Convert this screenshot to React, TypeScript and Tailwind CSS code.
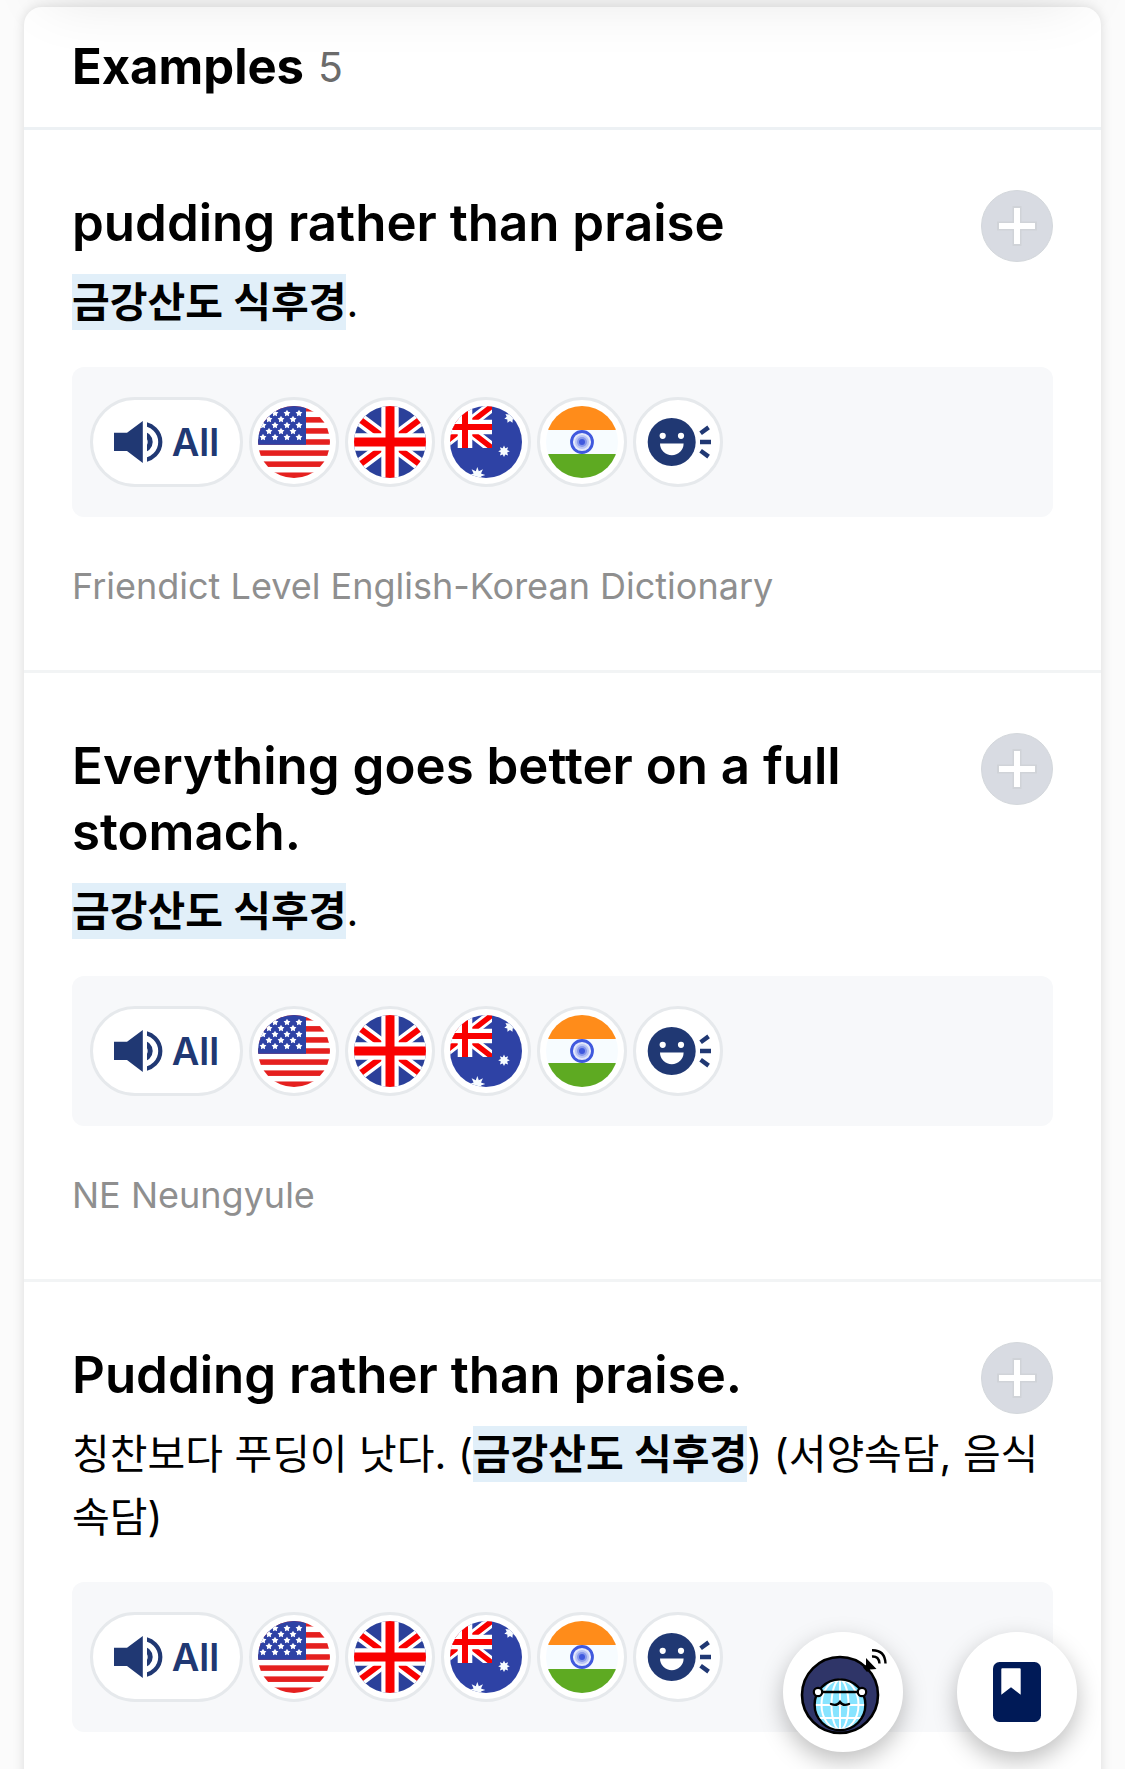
import React, { useId } from "react";

const NAVY = "#203873";

function starPoints(cx: number, cy: number, r: number, inner: number, n: number) {
  const pts: string[] = [];
  for (let i = 0; i < n * 2; i++) {
    const a = (Math.PI * i) / n - Math.PI / 2;
    const d = i % 2 === 0 ? r : inner;
    pts.push(`${(cx + d * Math.cos(a)).toFixed(2)},${(cy + d * Math.sin(a)).toFixed(2)}`);
  }
  return pts.join(" ");
}

function Flag({ children }: { children: React.ReactNode }) {
  const id = useId();
  return (
    <svg viewBox="0 0 72 72" className="size-[72px]" aria-hidden="true">
      <clipPath id={id}>
        <circle cx="36" cy="36" r="36" />
      </clipPath>
      <g clipPath={`url(#${id})`}>{children}</g>
    </svg>
  );
}

const US_STARS: [number, number][] = [
  [41, 7.3], [29, 7.3], [17, 7.3],
  [35, 13.3], [23, 13.3], [11, 13.3],
  [41, 19.3], [29, 19.3], [17, 19.3], [5, 19.3],
  [35, 25.3], [23, 25.3], [11, 25.3],
  [41, 31.3], [29, 31.3], [17, 31.3], [5, 31.3],
];

function UsFlag() {
  return (
    <Flag>
      <rect width="72" height="72" fill="#fff" />
      {[0, 1, 2, 3, 4, 5, 6].map((i) => (
        <rect key={i} y={i * 11.08} width="72" height="5.54" fill="#e5201f" />
      ))}
      <rect width="48" height="38.8" fill="#2e42a5" />
      {US_STARS.map(([x, y]) => (
        <polygon key={`${x}-${y}`} points={starPoints(x, y, 3.6, 1.9, 5)} fill="#fff" />
      ))}
    </Flag>
  );
}

function UkFlag() {
  return (
    <Flag>
      <rect width="72" height="72" fill="#2b409a" />
      <path d="M-12 0 84 72M84 0-12 72" stroke="#fff" strokeWidth="13" />
      <path d="M-12 0 84 72M84 0-12 72" stroke="#f90000" strokeWidth="6" />
      <path d="M36 0V72M0 36H72" stroke="#fff" strokeWidth="17.4" />
      <path d="M36 0V72M0 36H72" stroke="#f90000" strokeWidth="9" />
    </Flag>
  );
}

function AuFlag() {
  const id = useId();
  return (
    <Flag>
      <rect width="72" height="72" fill="#2e42a5" />
      <clipPath id={id}>
        <rect width="42" height="42" />
      </clipPath>
      <g clipPath={`url(#${id})`}>
        <path d="M-12 0 42 42M42 0-12 42" stroke="#fff" strokeWidth="11" />
        <path d="M-12 0 42 42M42 0-12 42" stroke="#f90000" strokeWidth="5.4" />
        <path d="M15 0V42M0 21H42" stroke="#fff" strokeWidth="14.6" />
        <path d="M15 0V42M0 21H42" stroke="#f90000" strokeWidth="6" />
      </g>
      <polygon points={starPoints(54, 45.3, 5.8, 3.4, 8)} fill="#f7fcff" />
      <polygon points={starPoints(60, 11.5, 5.8, 3.4, 7)} fill="#f7fcff" />
      <polygon points={starPoints(27.3, 69, 8, 4, 8)} fill="#f7fcff" />
    </Flag>
  );
}

function InFlag() {
  return (
    <Flag>
      <rect width="72" height="72" fill="#f7fcff" />
      <rect width="72" height="24" fill="#ff8c1a" />
      <rect y="48" width="72" height="24" fill="#5eaa22" />
      <circle cx="36" cy="36" r="10.5" fill="#e3e8fb" stroke="#4059de" strokeWidth="2.8" />
      <circle cx="36" cy="36" r="7" fill="#b9c4f4" />
      <circle cx="36" cy="36" r="5" fill="#8798ec" />
      <circle cx="36" cy="36" r="3" fill="#4059de" />
    </Flag>
  );
}

function SmileIcon() {
  return (
    <svg viewBox="0 0 84 84" className="size-[84px]" fill="none" aria-hidden="true">
      <circle cx="35.7" cy="42" r="24" fill={NAVY} />
      <circle cx="26.7" cy="35.8" r="3.1" fill="#fff" />
      <circle cx="45" cy="35.8" r="3.1" fill="#fff" />
      <path d="M24 43.4H47.6A11.8 11.8 0 0 1 24 43.4Z" fill="#fff" />
      <path d="M64.6 33.2 72.6 27.4M64 42H75M64.6 50.8 72.6 56.6" stroke={NAVY} strokeWidth="4.4" />
    </svg>
  );
}

function SpeakerIcon() {
  const id = useId();
  return (
    <svg viewBox="0 0 49 42" className="h-[42px] w-[49px]" fill="none" aria-hidden="true">
      <path d="M0 11.7H13L28.8 0V42L13 30H0Z" fill={NAVY} />
      <clipPath id={id}>
        <rect x="33" width="16" height="42" />
      </clipPath>
      <g clipPath={`url(#${id})`} stroke={NAVY}>
        <circle cx="28.2" cy="21" r="18.1" strokeWidth="4.2" />
        <circle cx="28.2" cy="21" r="8" strokeWidth="5" />
      </g>
    </svg>
  );
}

const VOICES = [
  { label: "American pronunciation", Icon: UsFlag },
  { label: "British pronunciation", Icon: UkFlag },
  { label: "Australian pronunciation", Icon: AuFlag },
  { label: "Indian pronunciation", Icon: InFlag },
  { label: "Friendly voice", Icon: SmileIcon },
];

function VoiceBar() {
  return (
    <div className="mt-[33px] flex flex-wrap gap-[6px] rounded-xl bg-[#f7f8fa] px-[18px] py-[30px]">
      <button
        type="button"
        className="flex h-[90px] w-[153px] items-center justify-center gap-[9px] rounded-full border-3 border-[#e6e9ec] bg-white text-[38px] leading-none font-semibold text-[#203873]"
      >
        <SpeakerIcon />
        All
      </button>
      {VOICES.map(({ label, Icon }) => (
        <button
          key={label}
          type="button"
          aria-label={label}
          className="flex size-[90px] items-center justify-center rounded-full border-3 border-[#e6e9ec] bg-white"
        >
          <Icon />
        </button>
      ))}
    </div>
  );
}

function Mark({ children }: { children: React.ReactNode }) {
  return <mark className="bg-[#e1eff9] py-[3px] font-semibold text-black">{children}</mark>;
}

function Example({
  title,
  translation,
  source,
}: {
  title: string;
  translation: React.ReactNode;
  source?: string;
}) {
  return (
    <li className="border-b-3 border-[#f2f4f5] px-12 pt-[60px] pb-[60px]">
      <div className="flex items-start justify-between gap-12">
        <h3 className="min-w-0 flex-1 pb-[6px] text-[51px] leading-[66px] font-semibold text-black">{title}</h3>
        <button type="button" aria-label="Add to wordbook" className="size-[72px] shrink-0">
          <svg viewBox="0 0 72 72" className="size-full" aria-hidden="true">
            <circle cx="36" cy="36" r="35.5" fill="#d8dbe2" stroke="#d3d7db" />
            <path d="M36 16V56M16 36H56" stroke="#d0d3d8" strokeWidth="9" />
            <path d="M36 18V54M18 36H54" stroke="#fff" strokeWidth="6" />
          </svg>
        </button>
      </div>
      <p className="mt-[9px] text-[41px] leading-[63px] text-black">{translation}</p>
      <VoiceBar />
      {source && <p className="mt-[45px] text-[36px] leading-[48px] text-[#8f8f8f]">{source}</p>}
    </li>
  );
}

function GlobeMascot() {
  return (
    <svg viewBox="0 0 120 120" className="size-full" fill="none" aria-hidden="true">
      <circle cx="57" cy="63" r="38" fill="#2f3568" stroke="#000" strokeWidth="2.6" />
      <circle cx="57" cy="72.8" r="25" fill="#87e4ff" />
      <g stroke="#fff" strokeWidth="2">
        <path d="M57 48V97M32 73H82M36 86H78M37 60H77" />
        <ellipse cx="57" cy="72.8" rx="8.5" ry="25" />
        <ellipse cx="57" cy="72.8" rx="18.5" ry="25" />
      </g>
      <circle cx="57" cy="72.8" r="25.4" stroke="#000" strokeWidth="2.4" />
      <path d="M35 60H79" stroke="#000" strokeWidth="2.4" />
      <circle cx="35" cy="60" r="4.2" fill="#fff" stroke="#000" strokeWidth="2.2" />
      <circle cx="79" cy="60" r="4.2" fill="#fff" stroke="#000" strokeWidth="2.2" />
      <path d="M48 72Q54 74.5 57 70Q60 74.5 66 72" stroke="#000" strokeWidth="2.4" strokeLinecap="round" />
      <path d="M83 26 93.5 37 87 37.5 84 40 80 35.5 83 33Z" fill="#000" />
      <path d="M89 24.5Q96 24 96.5 31.5M89 18.2Q102 18 102.500 31.5" stroke="#000" strokeWidth="2.4" />
    </svg>
  );
}

function WordbookIcon() {
  return (
    <svg viewBox="0 0 48 60" className="h-[60px] w-[48px]" aria-hidden="true">
      <rect width="48" height="60" rx="6.5" fill="#001a57" />
      <path d="M8.3 7.3Q8.3 6.3 9.3 6.3H26.7Q27.7 6.3 27.7 7.3V32.7L18 25.3 8.3 32.7Z" fill="#fff" />
    </svg>
  );
}

const FLOATING =
  "flex size-[120px] items-center justify-center rounded-full bg-white shadow-[0_9px_24px_rgba(0,0,0,0.26)]";

export default function App() {
  return (
    <div className="min-h-screen bg-[#fbfbfb] px-6 pt-[7px] font-['Inter','Noto_Sans_CJK_KR',sans-serif]">
      <div className="pointer-events-none fixed inset-x-12 -top-[60px] z-10 h-[60px] shadow-[0_0_60px_rgba(0,0,0,0.1)]" />
      <main className="rounded-t-[18px] bg-white shadow-[0_0_12px_rgba(0,0,0,0.13)]">
        <header className="flex h-[123px] items-center gap-[14px] border-b-3 border-[#edf1f4] px-12">
          <h2 className="text-[49px] leading-[60px] font-bold text-black">Examples</h2>
          <span className="text-[41px] leading-[60px] text-[#6b6b6b]">5</span>
        </header>
        <ul>
          <Example
            title="pudding rather than praise"
            translation={<><Mark>금강산도 식후경</Mark>.</>}
            source="Friendict Level English-Korean Dictionary"
          />
          <Example
            title="Everything goes better on a full stomach."
            translation={<><Mark>금강산도 식후경</Mark>.</>}
            source="NE Neungyule"
          />
          <Example
            title="Pudding rather than praise."
            translation={<>칭찬보다 푸딩이 낫다. (<Mark>금강산도 식후경</Mark>) (서양속담, 음식속담)</>}
          />
        </ul>
      </main>
      <div className="fixed right-12 bottom-[17px] z-20 flex gap-[54px]">
        <button type="button" aria-label="Translate" className={FLOATING}>
          <GlobeMascot />
        </button>
        <button type="button" aria-label="Open wordbook" className={FLOATING}>
          <WordbookIcon />
        </button>
      </div>
    </div>
  );
}
